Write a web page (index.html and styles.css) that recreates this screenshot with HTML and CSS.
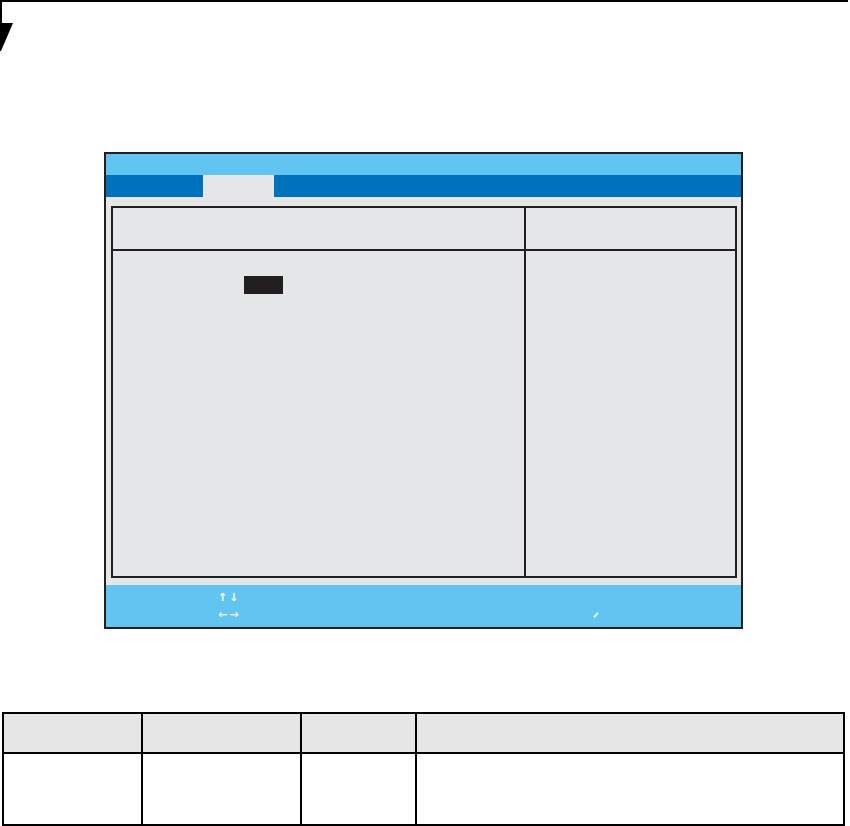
FILE: index.html
```html
<!DOCTYPE html>
<html lang="en">
<head>
    <meta charset="UTF-8">
    <meta name="viewport" content="width=device-width, initial-scale=1.0">
    <title>BIOS Setup - Main Menu</title>
    <link rel="stylesheet" href="styles.css">
</head>
<body>
    <div class="page-head">
        <div class="marker">
            <div class="marker-line"></div>
            <svg class="marker-tri" width="13" height="28" viewBox="0 0 13 28">
                <polygon points="0,0 13,0 1,28 0,28" fill="#000"/>
            </svg>
        </div>
    </div>

    <div class="bios">
        <div class="bios-title"></div>
        <div class="bios-menu">
            <div class="menu-tab active"></div>
        </div>
        <div class="bios-body">
            <div class="panel">
                <div class="panel-head">
                    <div class="col-main"></div>
                    <div class="col-help"></div>
                </div>
                <div class="panel-main">
                    <div class="col-main">
                        <div class="field-selected"></div>
                    </div>
                    <div class="col-help"></div>
                </div>
            </div>
        </div>
        <div class="bios-footer">
            <div class="footer-row">
                <span class="key-arrows"><span>↑</span><span>↓</span></span>
            </div>
            <div class="footer-row">
                <span class="key-arrows"><span>←</span><span>→</span></span>
                <svg class="key-mark" width="6" height="6" viewBox="0 0 6 6">
                    <line x1="1" y1="5" x2="5" y2="1" stroke="#fff" stroke-width="1.8"/>
                </svg>
            </div>
        </div>
    </div>

    <table class="settings">
        <thead>
            <tr>
                <th class="c-item"></th>
                <th class="c-option"></th>
                <th class="c-default"></th>
                <th class="c-desc"></th>
            </tr>
        </thead>
        <tbody>
            <tr>
                <td></td>
                <td></td>
                <td></td>
                <td></td>
            </tr>
        </tbody>
    </table>
</body>
</html>
```

FILE: styles.css
```css
* {
    margin: 0;
    padding: 0;
    box-sizing: border-box;
}

body {
    font-family: "Liberation Sans", Arial, sans-serif;
    background: #ffffff;
    width: 850px;
}

/* page header rule + corner marker */
.page-head {
    height: 50px;
    width: 848px;
    border-top: 2px solid #000;
}

.marker {
    display: flex;
    flex-direction: column;
    width: 13px;
}

.marker-line {
    width: 2px;
    height: 21px;
    background: #000;
}

.marker-tri {
    display: block;
}

/* bios screen */
.bios {
    margin: 102px 0 0 104px;
    width: 639px;
    border: 2px solid #231f20;
    background: #e5e6e8;
}

.bios-title {
    height: 21px;
    background: #62c4f0;
}

.bios-menu {
    height: 22px;
    background: #0071bc;
    padding-left: 97px;
}

.menu-tab {
    width: 71px;
    height: 100%;
}

.menu-tab.active {
    background: #e5e6e8;
}

.bios-body {
    padding: 9px 4px 7px 5px;
}

.panel {
    border: 2px solid #231f20;
    height: 372px;
    display: flex;
    flex-direction: column;
}

.panel-head,
.panel-main {
    display: flex;
}

.panel-head {
    height: 43px;
    border-bottom: 2px solid #231f20;
}

.panel-main {
    flex: 1;
}

.col-main {
    width: 413px;
    border-right: 2px solid #231f20;
}

.col-help {
    flex: 1;
}

.field-selected {
    margin: 25px 0 0 131px;
    width: 39px;
    height: 18px;
    background: #231f20;
}

.bios-footer {
    height: 42px;
    background: #62c4f0;
    padding: 4px 0 0 112px;
    color: #ffffff;
}

.footer-row {
    display: flex;
    align-items: center;
    height: 17px;
}

.key-arrows {
    display: flex;
    gap: 2px;
    width: 18px;
    font-family: "DejaVu Sans", sans-serif;
    font-size: 11px;
    font-weight: 700;
}

.key-mark {
    margin-left: 357px;
}

/* settings table */
.settings {
    margin: 83px 0 0 2px;
    width: 843px;
    border-collapse: collapse;
    table-layout: fixed;
}

.settings th,
.settings td {
    border: 2px solid #000;
}

.settings th {
    height: 40px;
    background: #e6e6e6;
}

.settings td {
    height: 72px;
}

.c-item { width: 139px; }
.c-option { width: 159px; }
.c-default { width: 115px; }
```
